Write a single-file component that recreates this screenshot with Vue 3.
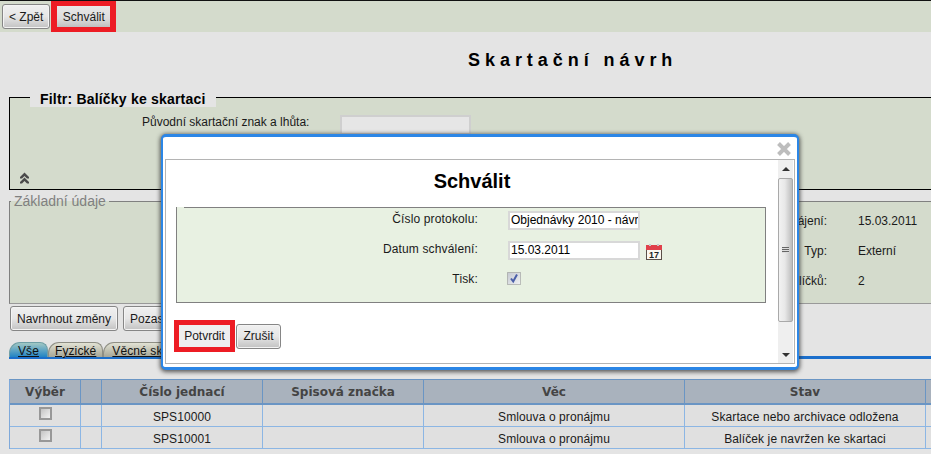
<script setup>
const columns = [
  { label: 'Výběr', width: 70 },
  { label: '', width: 20 },
  { label: 'Číslo jednací', width: 160 },
  { label: 'Spisová značka', width: 160 },
  { label: 'Věc', width: 260 },
  { label: 'Stav', width: 240 },
  { label: '', width: 60 }
]
const rows = [
  { id: 'SPS10000', subject: 'Smlouva o pronájmu', state: 'Skartace nebo archivace odložena' },
  { id: 'SPS10001', subject: 'Smlouva o pronájmu', state: 'Balíček je navržen ke skartaci' }
]
const meta = [
  ['Datum zahájení:', '15.03.2011'],
  ['Typ:', 'Externí'],
  ['Počet balíčků:', '2']
]
</script>

<template>
  <div class="page">
    <div class="toolbar">
      <button class="btn">&lt; Zpět</button>
      <span class="mark mark-top"><button class="btn flat">Schválit</button></span>
    </div>

    <h1 class="title">Skartační návrh</h1>

    <section class="filter">
      <div class="filter-legend">Filtr: Balíčky ke skartaci</div>
      <div class="filter-row">
        <label class="filter-label">Původní skartační znak a lhůta:</label>
        <span class="filter-input"></span>
      </div>
      <svg class="collapse" width="11" height="12" viewBox="0 0 11 12">
        <path d="M5.5 0.5 L10 5 L10 6.5 L8 6.5 L5.5 4 L3 6.5 L1 6.5 L1 5 Z" fill="#4a4a4a" />
        <path d="M5.5 5.5 L10 10 L10 11.5 L8 11.5 L5.5 9 L3 11.5 L1 11.5 L1 10 Z" fill="#4a4a4a" />
      </svg>
    </section>

    <fieldset class="basic">
      <legend>Základní údaje</legend>
      <div class="meta">
        <template v-for="m in meta" :key="m[0]">
          <span class="meta-label">{{ m[0] }}</span>
          <span class="meta-value">{{ m[1] }}</span>
        </template>
      </div>
    </fieldset>

    <div class="actions">
      <button class="btn">Navrhnout změny</button>
      <button class="btn">Pozastavit</button>
    </div>

    <div class="tabs">
      <a class="tab active">Vše</a>
      <a class="tab narrow">Fyzické</a>
      <a class="tab">Věcné skupiny</a>
    </div>

    <table class="grid">
      <thead>
        <tr>
          <th v-for="(c, i) in columns" :key="i" :style="{ width: c.width + 'px' }">{{ c.label }}</th>
        </tr>
      </thead>
      <tbody>
        <tr v-for="r in rows" :key="r.id">
          <td><span class="check"></span></td>
          <td></td>
          <td>{{ r.id }}</td>
          <td></td>
          <td>{{ r.subject }}</td>
          <td>{{ r.state }}</td>
          <td></td>
        </tr>
      </tbody>
    </table>

    <div class="modal">
      <div class="modal-head">
        <svg width="16" height="16" viewBox="0 0 16 16">
          <path d="M2.5 2.5 L13.5 13.5 M13.5 2.5 L2.5 13.5" stroke="#bdbdbd" stroke-width="4" fill="none" />
        </svg>
      </div>
      <div class="frame">
        <div class="frame-body">
          <h2 class="modal-title">Schválit</h2>
          <fieldset class="panel">
            <legend></legend>
            <div class="form-row first">
              <label>Číslo protokolu:</label>
              <span class="field">Objednávky 2010 - návr</span>
            </div>
            <div class="form-row">
              <label>Datum schválení:</label>
              <span class="field">15.03.2011</span>
              <svg class="cal" width="16" height="16" viewBox="0 0 16 16">
                <rect x="0.5" y="1.5" width="15" height="14" fill="#fbf8f0" stroke="#5a5048" />
                <rect x="0" y="1" width="16" height="5" fill="#e0404a" />
                <rect x="3" y="0" width="2" height="2" fill="#c9c9c9" />
                <rect x="11" y="0" width="2" height="2" fill="#c9c9c9" />
                <text x="8" y="14" text-anchor="middle" class="cal-num">17</text>
              </svg>
            </div>
            <div class="form-row tick">
              <label>Tisk:</label>
              <svg class="tick-box" width="14" height="13" viewBox="0 0 14 13">
                <defs>
                  <linearGradient id="tickFill" x1="0" y1="0" x2="1" y2="1">
                    <stop offset="0" stop-color="#c4c8d0" />
                    <stop offset="1" stop-color="#f0f2f4" />
                  </linearGradient>
                </defs>
                <rect x="0.5" y="0.5" width="13" height="12" fill="url(#tickFill)" stroke="#8a8a8a" stroke-dasharray="1 1" />
                <path d="M4 6.5 L6.2 9.5 L10 2.5" stroke="#4a5fa8" stroke-width="2" fill="none" />
              </svg>
            </div>
          </fieldset>
          <div class="modal-actions">
            <span class="mark mark-bottom"><button class="btn plain">Potvrdit</button></span>
            <button class="btn">Zrušit</button>
          </div>
        </div>
        <div class="scroll">
          <span class="arrow up"></span>
          <span class="thumb"><i></i></span>
          <span class="track"></span>
          <span class="arrow down"></span>
        </div>
      </div>
    </div>
  </div>
</template>

<style scoped>
.page {
  position: relative;
  width: 931px;
  height: 454px;
  overflow: hidden;
  background: #e4e4e4;
  font-family: "Liberation Sans", Arial, sans-serif;
  font-size: 12px;
  color: #1a1a1a;
}
.toolbar {
  height: 31px;
  border-top: 1px solid #111;
  background: #d4dbcc;
  display: flex;
  align-items: flex-start;
  padding-left: 2px;
}
.btn {
  font-family: "Liberation Sans", Arial, sans-serif;
  font-size: 12px;
  color: #1a1a1a;
  height: 25px;
  padding: 0 6px;
  border: 1px solid #868686;
  border-radius: 3px;
  background: linear-gradient(#f0f0f0, #e6e6e6 50%, #c2c2c2);
  box-shadow: inset 0 0 0 1px #f4f4f4;
  margin: 3px 0 0;
}
.mark {
  display: inline-flex;
  box-sizing: border-box;
  border: 5px solid #ed1c24;
}
.mark-top {
  margin-left: 1px;
  width: 65px;
  height: 31px;
  border-width: 5px 6px;
}
.mark .flat {
  flex: 1;
  margin: 0;
  height: 21px;
  border: 0;
  border-radius: 0;
  padding: 0;
  box-shadow: none;
  background: linear-gradient(#e8e8e8, #dcdcdc 60%, #c0c0c0);
}
.title {
  margin: 0;
  height: 65px;
  padding-left: 468px;
  box-sizing: border-box;
  padding-top: 18px;
  font-size: 18px;
  line-height: 20px;
  font-weight: bold;
  letter-spacing: 4.95px;
  color: #000;
}
.filter {
  position: relative;
  height: 93px;
  margin-left: 9px;
  box-sizing: border-box;
  border: 1px solid #000;
  border-right: 0;
  background: #d4dbcc;
}
.filter-legend {
  position: absolute;
  left: 20px;
  top: -5px;
  height: 14px;
  padding: 0 10px;
  background: #e4e4e4;
  font-size: 14px;
  line-height: 13px;
  letter-spacing: 0.2px;
  font-weight: bold;
  color: #000;
}
.filter-row {
  display: flex;
  margin-left: 132px;
  padding-top: 17px;
}
.filter-label { width: 198px; line-height: 15px; }
.filter-input {
  width: 127px;
  height: 16px;
  border: 2px solid #cfcfcf;
  background: #e6e6e6;
}
.collapse {
  position: absolute;
  left: 9px;
  bottom: 5px;
}
.basic {
  margin: 3px 0 0 9px;
  padding: 0;
  height: 111px;
  box-sizing: border-box;
  border: 1px solid #808080;
  border-right: 0;
  border-bottom: 1px solid #999;
  background: #d4dbcc;
  min-width: 0;
}
.basic legend {
  margin-left: 1px;
  padding: 0 3px;
  font-size: 14px;
  line-height: 16px;
  color: #808080;
}
.meta {
  display: grid;
  grid-template-columns: 817px auto;
  column-gap: 31px;
  row-gap: 16px;
  padding-top: 5px;
  line-height: 14px;
}
.meta-label { text-align: right; }
.actions {
  display: flex;
  gap: 5px;
  padding-left: 10px;
  height: 38px;
}
.actions .btn { margin-top: 2px; }
.tabs {
  display: flex;
  margin-left: 9px;
  height: 14px;
  border-bottom: 3px solid #1c6fcc;
}
.tab {
  height: 15px;
  padding: 0 8px;
  border-radius: 11px 8px 0 0;
  background: linear-gradient(#e2e2d4, #a6a696);
  border: 1px solid #8e8e84;
  border-bottom: 0;
  box-sizing: border-box;
  line-height: 16px;
  font-size: 12px;
  letter-spacing: 0.1px;
  text-decoration: underline;
  color: #111;
}
.tab.narrow { padding: 0 6px; }
.tab.active {
  background: linear-gradient(#a2c8c4, #2184c4);
  border-color: #6f9fa6;
}
.grid {
  margin: 20px 0 0 9px;
  width: 976px;
  table-layout: fixed;
  border-collapse: separate;
  border-spacing: 0;
  border-left: 1px solid #7fa9da;
  border-top: 1px solid #6a95c4;
}
.grid th {
  height: 23px;
  padding: 0;
  box-sizing: content-box;
  background: #a9b2bd;
  border-right: 1px solid #6a95c4;
  border-bottom: 2px solid #6a95c4;
  font-family: "DejaVu Sans", Verdana, sans-serif;
  font-size: 12px;
  font-weight: bold;
  color: #444;
}
.grid td {
  height: 19px;
  padding: 2px 0 0;
  text-align: center;
  letter-spacing: 0.1px;
  background: #e0e0e0;
  border-right: 1px solid #8cb6e4;
  border-bottom: 1px solid #8cb6e4;
}
.check {
  display: block;
  width: 9px;
  height: 9px;
  margin: 0 auto 6px;
  border: 2px solid #989898;
  background: linear-gradient(135deg, #c4c4c4, #f2f2f2);
}
.modal {
  position: absolute;
  left: 161px;
  top: 134px;
  width: 638px;
  height: 236px;
  box-sizing: border-box;
  display: flex;
  flex-direction: column;
  border: 2px solid #2b86e6;
  border-top-width: 3px;
  border-bottom-width: 3px;
  border-radius: 5px;
  background: #fff;
  padding: 0 2px 3px 2px;
  box-shadow: 0 1px 4px 1px rgba(40, 40, 40, 0.75);
}
.modal-head {
  height: 22px;
  flex: none;
  display: flex;
  justify-content: flex-end;
  align-items: flex-start;
  padding-top: 4px;
  box-sizing: border-box;
  padding-right: 3px;
}
.frame {
  flex: 1;
  min-height: 0;
  display: flex;
  border: 1px solid #b4b4b4;
}
.frame-body {
  flex: 1;
  min-width: 0;
}
.modal-title {
  margin: 0;
  height: 47px;
  padding-top: 10px;
  box-sizing: border-box;
  text-align: center;
  font-size: 20px;
  line-height: 23px;
  font-weight: bold;
  color: #000;
}
.panel {
  margin: 0 0 0 10px;
  width: 590px;
  height: 96px;
  box-sizing: border-box;
  padding: 0;
  border: 1px solid #808080;
  background: #e8f1e2;
  min-width: 0;
}
.panel legend {
  width: 7px;
  padding: 0;
  height: 0;
}
.form-row {
  display: flex;
  align-items: center;
  height: 19px;
  margin-top: 11px;
}
.form-row.first { margin-top: 3px; }
.form-row label {
  width: 301px;
  text-align: right;
  letter-spacing: 0.15px;
  position: relative;
  top: -2px;
}
.form-row.tick label { top: 0; }
.field {
  width: 127px;
  height: 15px;
  margin-left: 30px;
  padding: 0 0 0 1px;
  overflow: hidden;
  white-space: nowrap;
  border: 2px solid #d8d8d8;
  background: #fff;
  font-size: 12px;
  line-height: 15px;
  color: #000;
}
.cal { margin-left: 6px; margin-top: 3px; }
.cal-num { font: bold 9px "Liberation Sans", sans-serif; fill: #222; }
.tick { height: 13px; margin-top: 12px; }
.tick-box { margin-left: 29px; }
.modal-actions {
  display: flex;
  align-items: center;
  gap: 1px;
  margin: 17px 0 0 8px;
}
.mark-bottom {
  width: 61px;
  height: 32px;
}
.mark .plain {
  flex: 1;
  height: 22px;
  margin: 0;
  padding: 0;
  border: 0;
  border-radius: 0;
  box-shadow: none;
  background: #eee;
}
.modal-actions > .btn { margin: 0; width: 45px; padding: 0; }
.scroll {
  width: 15px;
  margin-right: 1px;
  display: flex;
  flex-direction: column;
  background: #efefef;
  flex: none;
}
.arrow {
  height: 18px;
  flex: none;
  position: relative;
}
.arrow::after {
  content: "";
  position: absolute;
  left: 4px;
  border-left: 4px solid transparent;
  border-right: 4px solid transparent;
}
.arrow.up::after { top: 7px; border-bottom: 4px solid #333; }
.arrow.down::after { bottom: 6px; border-top: 4px solid #333; }
.thumb {
  height: 144px;
  flex: none;
  box-sizing: border-box;
  border: 1px solid #a9a9a9;
  border-radius: 2px;
  background: linear-gradient(90deg, #f2f2f2, #e8e8e8 45%, #bdbdbd);
  display: flex;
  align-items: center;
  justify-content: center;
}
.thumb i {
  display: block;
  width: 7px;
  height: 6px;
  background: repeating-linear-gradient(#666 0 1px, #ddd 1px 2px);
}
.track { flex: 1; }
</style>

<style>
body { margin: 0; }
</style>
